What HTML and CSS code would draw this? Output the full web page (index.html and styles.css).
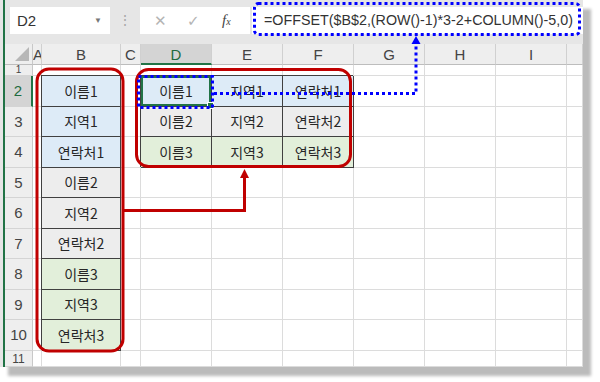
FILE: index.html
```html
<!DOCTYPE html>
<html>
<head>
	<meta charset="utf-8">
	<title>OFFSET 예제</title>
	<link rel="stylesheet" href="styles.css">
</head>
<body>
<div class="stage">
	<div class="frame">
		<div class="toolbar">
			<div class="namebox"><span>D2</span><span class="caret">▼</span></div>
			<div class="grip">⋮</div>
			<div class="fxbox"><span class="btn">✕</span><span class="btn">✓</span><span class="fx">f<small>x</small></span></div>
			<div class="formula">=OFFSET($B$2,(ROW()-1)*3-2+COLUMN()-5,0)</div>
		</div>

		<div class="sheet">
			<!-- en-têtes -->
			<div class="corner"><span class="tri"></span></div>
			<div class="h">A</div><div class="h">B</div><div class="h">C</div><div class="h on">D</div><div class="h">E</div>
			<div class="h">F</div><div class="h">G</div><div class="h">H</div><div class="h">I</div><div class="h"></div>

			<!-- 1 -->
			<div class="rh top">1</div>
			<div class="c"></div><div class="c"></div><div class="c"></div><div class="c"></div><div class="c"></div>
			<div class="c"></div><div class="c"></div><div class="c"></div><div class="c"></div><div class="c"></div>

			<!-- 2 -->
			<div class="rh on">2</div>
			<div class="c"></div><div class="d blue">이름1</div><div class="c"></div>
			<div class="d blue sel">이름1</div><div class="d blue">지역1</div><div class="d blue">연락처1</div>
			<div class="c"></div><div class="c"></div><div class="c"></div><div class="c"></div>

			<!-- 3 -->
			<div class="rh">3</div>
			<div class="c"></div><div class="d blue">지역1</div><div class="c"></div>
			<div class="d gray">이름2</div><div class="d gray">지역2</div><div class="d gray">연락처2</div>
			<div class="c"></div><div class="c"></div><div class="c"></div><div class="c"></div>

			<!-- 4 -->
			<div class="rh">4</div>
			<div class="c"></div><div class="d blue">연락처1</div><div class="c"></div>
			<div class="d green">이름3</div><div class="d green">지역3</div><div class="d green">연락처3</div>
			<div class="c"></div><div class="c"></div><div class="c"></div><div class="c"></div>

			<!-- 5 -->
			<div class="rh">5</div>
			<div class="c"></div><div class="d gray">이름2</div><div class="c"></div>
			<div class="c"></div><div class="c"></div><div class="c"></div>
			<div class="c"></div><div class="c"></div><div class="c"></div><div class="c"></div>

			<!-- 6 -->
			<div class="rh">6</div>
			<div class="c"></div><div class="d gray">지역2</div><div class="c"></div>
			<div class="c"></div><div class="c"></div><div class="c"></div>
			<div class="c"></div><div class="c"></div><div class="c"></div><div class="c"></div>

			<!-- 7 -->
			<div class="rh">7</div>
			<div class="c"></div><div class="d gray">연락처2</div><div class="c"></div>
			<div class="c"></div><div class="c"></div><div class="c"></div>
			<div class="c"></div><div class="c"></div><div class="c"></div><div class="c"></div>

			<!-- 8 -->
			<div class="rh">8</div>
			<div class="c"></div><div class="d green">이름3</div><div class="c"></div>
			<div class="c"></div><div class="c"></div><div class="c"></div>
			<div class="c"></div><div class="c"></div><div class="c"></div><div class="c"></div>

			<!-- 9 -->
			<div class="rh">9</div>
			<div class="c"></div><div class="d green">지역3</div><div class="c"></div>
			<div class="c"></div><div class="c"></div><div class="c"></div>
			<div class="c"></div><div class="c"></div><div class="c"></div><div class="c"></div>

			<!-- 10 -->
			<div class="rh">10</div>
			<div class="c"></div><div class="d green">연락처3</div><div class="c"></div>
			<div class="c"></div><div class="c"></div><div class="c"></div>
			<div class="c"></div><div class="c"></div><div class="c"></div><div class="c"></div>

			<!-- 11 -->
			<div class="rh bottom">11</div>
			<div class="c"></div><div class="c"></div><div class="c"></div><div class="c"></div><div class="c"></div>
			<div class="c"></div><div class="c"></div><div class="c"></div><div class="c"></div><div class="c"></div>
		</div>
	</div>

	<!-- annotations -->
	<svg class="overlay" width="600" height="382" viewBox="0 0 600 382">
		<g fill="none" stroke="#c00000" stroke-width="3">
			<rect x="37" y="69" width="86" height="282" rx="12"/>
			<rect x="136.5" y="69.5" width="214" height="97" rx="12"/>
			<path d="M124 210.5 H244.5 V177"/>
		</g>
		<polygon points="244.5,169 240,178 249,178" fill="#c00000"/>

		<g fill="none" stroke="#0000ff" stroke-width="3" stroke-dasharray="3 3">
			<rect x="138.5" y="76.5" width="74" height="31"/>
			<rect x="254.5" y="3.5" width="325" height="31" rx="4"/>
			<path d="M214 93.5 H416 V43"/>
		</g>
		<polygon points="416,36 411.5,44 420.5,44" fill="#0000ff"/>
	</svg>
</div>
</body>
</html>
```

FILE: styles.css
```css
html, body {
	margin: 0;
	background: #fff;
}
.stage {
	position: relative;
	width: 600px;
	height: 382px;
}
.frame {
	width: 580px;
	height: 367px;
	padding-left: 3px;
	background: #e6e6e6;
	box-shadow: 8px 9px 3px #bbb;
}
.toolbar,
.sheet {
	border-left: 2px solid #217346;
}

/* barre de formule */
.toolbar {
	height: 44px;
	box-sizing: border-box;
	padding-top: 7px;
	display: flex;
	align-items: flex-start;
	font-family: "Liberation Sans", Arial, sans-serif;
}
.namebox {
	margin-left: 5px;
	width: 100px;
	height: 27px;
	background: #fff;
	display: flex;
	align-items: center;
	justify-content: space-between;
	padding: 0 8px 0 7px;
	box-sizing: border-box;
	font-size: 15px;
	color: #333;
}
.caret {
	font-size: 8px;
	color: #777;
}
.grip {
	width: 30px;
	height: 27px;
	line-height: 27px;
	text-align: center;
	color: #a8a8a8;
	font-size: 14px;
}
.fxbox {
	width: 110px;
	height: 27px;
	background: #fff;
	display: flex;
	align-items: center;
	padding-left: 14px;
	box-sizing: border-box;
}
.btn {
	width: 33px;
	color: #b4b4b4;
	font-size: 15px;
	font-family: "DejaVu Sans", sans-serif;
}
.fx {
	font-family: "Liberation Serif", serif;
	font-style: italic;
	font-size: 15px;
	color: #444;
	margin-left: 2px;
}
.fx small {
	font-size: 10px;
}
.formula {
	margin-left: 2px;
	flex: 1;
	height: 27px;
	line-height: 27px;
	background: #fff;
	padding-left: 12px;
	font-size: 14.3px;
	color: #333;
	white-space: nowrap;
	overflow: hidden;
}

/* feuille */
.sheet {
	display: grid;
	grid-template-columns: 28px 9px 79px 20px repeat(6, 71px) 16px;
	grid-template-rows: 21px 11px repeat(9, 30.5px) 16.5px;
	background: #fff;
	font-family: "Liberation Sans", Arial, sans-serif;
}
.sheet > div {
	box-sizing: border-box;
	overflow: hidden;
}
.corner {
	background: #eee;
	border-right: 1px solid #c8c8c8;
	border-bottom: 1px solid #bdbdbd;
	display: flex;
	align-items: flex-end;
	justify-content: flex-end;
	padding: 0 3px 3px 0;
}
.tri {
	width: 0;
	height: 0;
	border-left: 14px solid transparent;
	border-bottom: 14px solid #b7b7b7;
}
.h {
	background: #eee;
	border-right: 1px solid #d0d0d0;
	border-bottom: 1px solid #bdbdbd;
	text-align: center;
	line-height: 21px;
	font-size: 15px;
	color: #444;
}
.h.on {
	background: #d4d4d4;
	border-bottom: 2px solid #217346;
	color: #1e6b40;
}
.rh {
	background: #eee;
	border-right: 1px solid #c8c8c8;
	border-bottom: 1px solid #d4d4d4;
	display: flex;
	align-items: center;
	justify-content: center;
	font-size: 15px;
	color: #444;
}
.rh.on {
	background: #d4d4d4;
	border-right: 2px solid #217346;
	color: #1e6b40;
}
.rh.top {
	font-size: 10px;
	line-height: 10px;
	align-items: flex-end;
}
.rh.bottom {
	font-size: 12px;
	line-height: 14px;
	align-items: flex-end;
}
.c {
	border-right: 1px solid #dcdcdc;
	border-bottom: 1px solid #dcdcdc;
}
.d {
	border-right: 1px solid #404040;
	border-bottom: 1px solid #404040;
	box-shadow: -1px -1px 0 #404040;
	display: flex;
	align-items: center;
	justify-content: center;
	font-family: "Noto Sans CJK KR", sans-serif;
	font-size: 14px;
	color: #262626;
}
.blue { background: #ddebf7; }
.gray { background: #ededed; }
.green { background: #e2efda; }
.sel {
	position: relative;
	box-shadow: -1px -1px 0 #404040, inset 0 0 0 2px #217346;
	overflow: visible !important;
}
.sel::after {
	content: "";
	position: absolute;
	right: -3px;
	bottom: -3px;
	width: 5px;
	height: 5px;
	background: #217346;
	border: 1px solid #fff;
}

.overlay {
	position: absolute;
	left: 0;
	top: 0;
	pointer-events: none;
}
```
